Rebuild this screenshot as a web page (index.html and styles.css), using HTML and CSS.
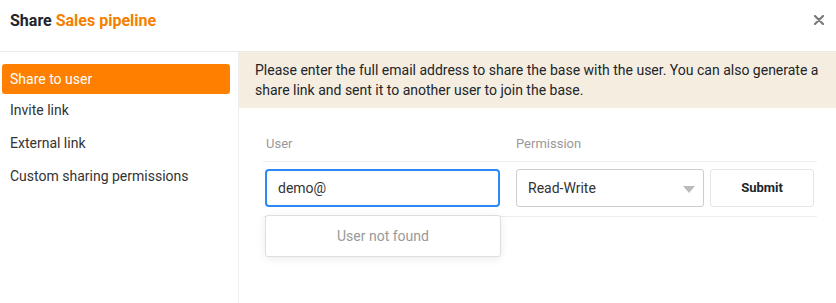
FILE: index.html
```html
<!DOCTYPE html>
<html>
<head>
<meta charset="utf-8">
<link rel="stylesheet" href="styles.css">
</head>
<body>
<div class="dialog">
  <div class="header">
    <div class="title">Share <span class="accent">Sales pipeline</span></div>
    <div class="close">
      <svg width="10" height="10" viewBox="0 0 10 10"><path d="M1 1L9 9M9 1L1 9" stroke="#7a7a7a" stroke-width="2.2" stroke-linecap="round"/></svg>
    </div>
  </div>
  <div class="body">
    <div class="sidebar">
      <div class="nav-item active">Share to user</div>
      <div class="nav-item">Invite link</div>
      <div class="nav-item">External link</div>
      <div class="nav-item">Custom sharing permissions</div>
    </div>
    <div class="main">
      <div class="notice">Please enter the full email address to share the base with the user. You can also generate a share link and sent it to another user to join the base.</div>
      <div class="table">
        <div class="thead">
          <div class="th col-user">User</div>
          <div class="th col-perm">Permission</div>
        </div>
        <div class="trow">
          <div class="col-user cell-user">
            <div class="input">demo@</div>
            <div class="dropdown">User not found</div>
          </div>
          <div class="col-perm cell-perm">
            <div class="select">Read-Write<span class="caret"></span></div>
            <div class="btn">Submit</div>
          </div>
        </div>
      </div>
    </div>
  </div>
</div>
</body>
</html>
```
FILE: styles.css
```css
* { box-sizing: border-box; }
html, body { margin: 0; padding: 0; background: #fff; }
body { font-family: Roboto, "Liberation Sans", sans-serif; color: #333; width: 836px; height: 303px; overflow: hidden; }
.dialog { width: 836px; height: 303px; display: flex; flex-direction: column; }
.header { height: 52px; border-bottom: 1px solid #e9e9e9; display: flex; align-items: center; justify-content: space-between; padding: 0 12px 0 10px; flex: none; }
.title { font-size: 16px; font-weight: 700; color: #212529; margin-top: -10px; }
.accent { color: #f57f00; }
.close { width: 10px; height: 10px; display: flex; margin-top: -11px; }
.body { flex: 1; display: flex; }
.sidebar { width: 239px; border-right: 1px solid #eee; padding: 12px 8px 0 2px; flex: none; }
.nav-item { height: 32px; line-height: 32px; padding-left: 8px; font-size: 14px; color: #333; border-radius: 3px; margin-bottom: 1px; }
.nav-item.active { background: #ff8000; color: #fff; height: 30px; line-height: 30px; margin-bottom: 0; }
.main { flex: 1; display: flex; flex-direction: column; }
.notice { background: #f6ede1; padding: 8px 16px; font-size: 14px; line-height: 20px; color: #212529; height: 56px; }
.table { margin: 17px 19px 0 24px; }
.thead { display: flex; height: 37px; border-bottom: 1px solid #eee; align-items: center; font-size: 13px; color: #999; }
.th.col-user { padding-left: 3px; }
.col-user { width: 253px; flex: none; }
.col-perm { flex: 1; }
.trow { display: flex; height: 55px; border-bottom: 1px solid #eee; padding-top: 7px; }
.cell-user { position: relative; padding-left: 2px; }
.input { width: 235px; height: 38px; border: 2px solid #2d89f5; border-radius: 4px; padding-left: 11px; line-height: 34px; font-size: 14px; color: #333; }
.dropdown { position: absolute; left: 2px; top: 46px; width: 236px; height: 42px; border: 1px solid #dedede; border-radius: 3px; background: #fff; box-shadow: 0 2px 8px rgba(0,0,0,0.08); text-align: center; line-height: 40px; font-size: 14px; color: #999; z-index: 2; }
.cell-perm { display: flex; gap: 6px; }
.select { width: 188px; height: 38px; border: 1px solid #ccc; border-radius: 3px; padding-left: 11px; line-height: 36px; font-size: 14px; color: #333; position: relative; }
.caret { position: absolute; right: 8px; top: 16px; width: 0; height: 0; border-left: 6px solid transparent; border-right: 6px solid transparent; border-top: 7px solid #bbb; }
.btn { width: 104px; height: 38px; border: 1px solid #e2e6ea; border-radius: 3px; text-align: center; line-height: 36px; font-size: 13px; font-weight: 700; color: #212529; }
```
